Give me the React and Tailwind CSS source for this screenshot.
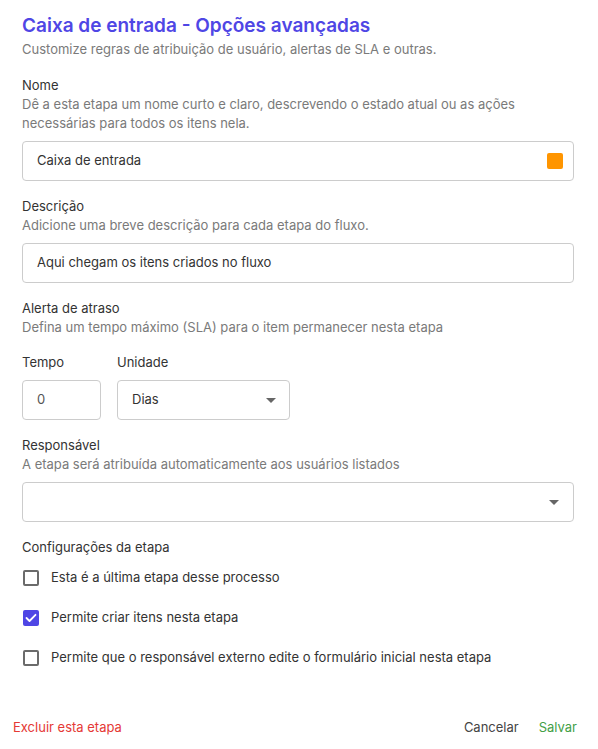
import React from "react";

const font = { fontFamily: "Inter, 'Noto Sans', sans-serif" };

function Label({ title, desc }) {
  return (
    <div>
      <div className="text-[13px] leading-[19px] text-[#333333]">{title}</div>
      {desc && <div className="text-[13px] leading-[19px] text-[#7a7a7a]">{desc}</div>}
    </div>
  );
}

function Caret() {
  return (
    <svg width="10" height="5" viewBox="0 0 10 5" className="shrink-0">
      <path d="M0 0 L10 0 L5 5 Z" fill="#666666" />
    </svg>
  );
}

function Checkbox({ checked, label }) {
  return (
    <div className="flex h-[40px] items-center gap-[12px] pl-[1px]">
      {checked ? (
        <div className="flex h-[16px] w-[16px] items-center justify-center rounded-[2px] bg-[#4f46e5]">
          <svg width="12" height="10" viewBox="0 0 12 10">
            <path d="M1.5 5 L4.5 8 L10.5 1.8" stroke="white" strokeWidth="1.8" fill="none" strokeLinecap="round" strokeLinejoin="round" />
          </svg>
        </div>
      ) : (
        <div className="h-[16px] w-[16px] rounded-[2px] border-2 border-[#6b6b6b]" />
      )}
      <span className="text-[13px] text-[#333333]">{label}</span>
    </div>
  );
}

export default function App() {
  return (
    <div style={font} className="flex h-[749px] w-[598px] flex-col bg-white">
      <div className="flex flex-col pl-[22px] pr-[24px] pt-[14px]">
        <h1 className="text-[19px] font-semibold leading-[24px] text-[#4f46e5]">
          Caixa de entrada - Opções avançadas
        </h1>
        <p className="mt-[2px] text-[13px] leading-[19px] text-[#7a7a7a]">
          Customize regras de atribuição de usuário, alertas de SLA e outras.
        </p>

        <div className="mt-[17px]">
          <Label
            title="Nome"
            desc="Dê a esta etapa um nome curto e claro, descrevendo o estado atual ou as ações necessárias para todos os itens nela."
          />
        </div>
        <div className="mt-[8px] flex h-[40px] items-center justify-between rounded-[4px] border border-[#cccccc] pl-[14px] pr-[10px]">
          <span className="text-[13px] text-[#333333]">Caixa de entrada</span>
          <div className="h-[16px] w-[16px] rounded-[2px] bg-[#ff9500]" />
        </div>

        <div className="mt-[16px]">
          <Label title="Descrição" desc="Adicione uma breve descrição para cada etapa do fluxo." />
        </div>
        <div className="mt-[8px] flex h-[40px] items-center rounded-[4px] border border-[#cccccc] pl-[14px]">
          <span className="text-[13px] text-[#333333]">Aqui chegam os itens criados no fluxo</span>
        </div>

        <div className="mt-[16px]">
          <Label
            title="Alerta de atraso"
            desc="Defina um tempo máximo (SLA) para o item permanecer nesta etapa"
          />
        </div>

        <div className="mt-[16px] flex gap-[16px]">
          <div className="flex flex-col gap-[8px]">
            <div className="text-[13px] leading-[19px] text-[#333333]">Tempo</div>
            <div className="flex h-[40px] w-[79px] items-center rounded-[4px] border border-[#cccccc] pl-[14px]">
              <span className="text-[13px] text-[#555555]">0</span>
            </div>
          </div>
          <div className="flex flex-col gap-[8px]">
            <div className="text-[13px] leading-[19px] text-[#333333]">Unidade</div>
            <div className="flex h-[40px] w-[173px] items-center justify-between rounded-[4px] border border-[#cccccc] pl-[14px] pr-[13px]">
              <span className="text-[13px] text-[#333333]">Dias</span>
              <Caret />
            </div>
          </div>
        </div>

        <div className="mt-[16px]">
          <Label title="Responsável" desc="A etapa será atribuída automaticamente aos usuários listados" />
        </div>
        <div className="mt-[8px] flex h-[40px] items-center justify-end rounded-[4px] border border-[#cccccc] pr-[14px]">
          <Caret />
        </div>

        <div className="mt-[16px]">
          <Label title="Configurações da etapa" />
        </div>
        <div className="mt-[1px] flex flex-col">
          <Checkbox label="Esta é a última etapa desse processo" />
          <Checkbox checked label="Permite criar itens nesta etapa" />
          <Checkbox label="Permite que o responsável externo edite o formulário inicial nesta etapa" />
        </div>
      </div>

      <div className="mt-auto mb-[12px] flex items-center justify-between pl-[13px] pr-[21px]">
        <button className="text-[13px] text-[#e53935]">Excluir esta etapa</button>
        <div className="flex items-center gap-[20px]">
          <button className="text-[13px] text-[#444444]">Cancelar</button>
          <button className="text-[13px] text-[#43a047]">Salvar</button>
        </div>
      </div>
    </div>
  );
}
